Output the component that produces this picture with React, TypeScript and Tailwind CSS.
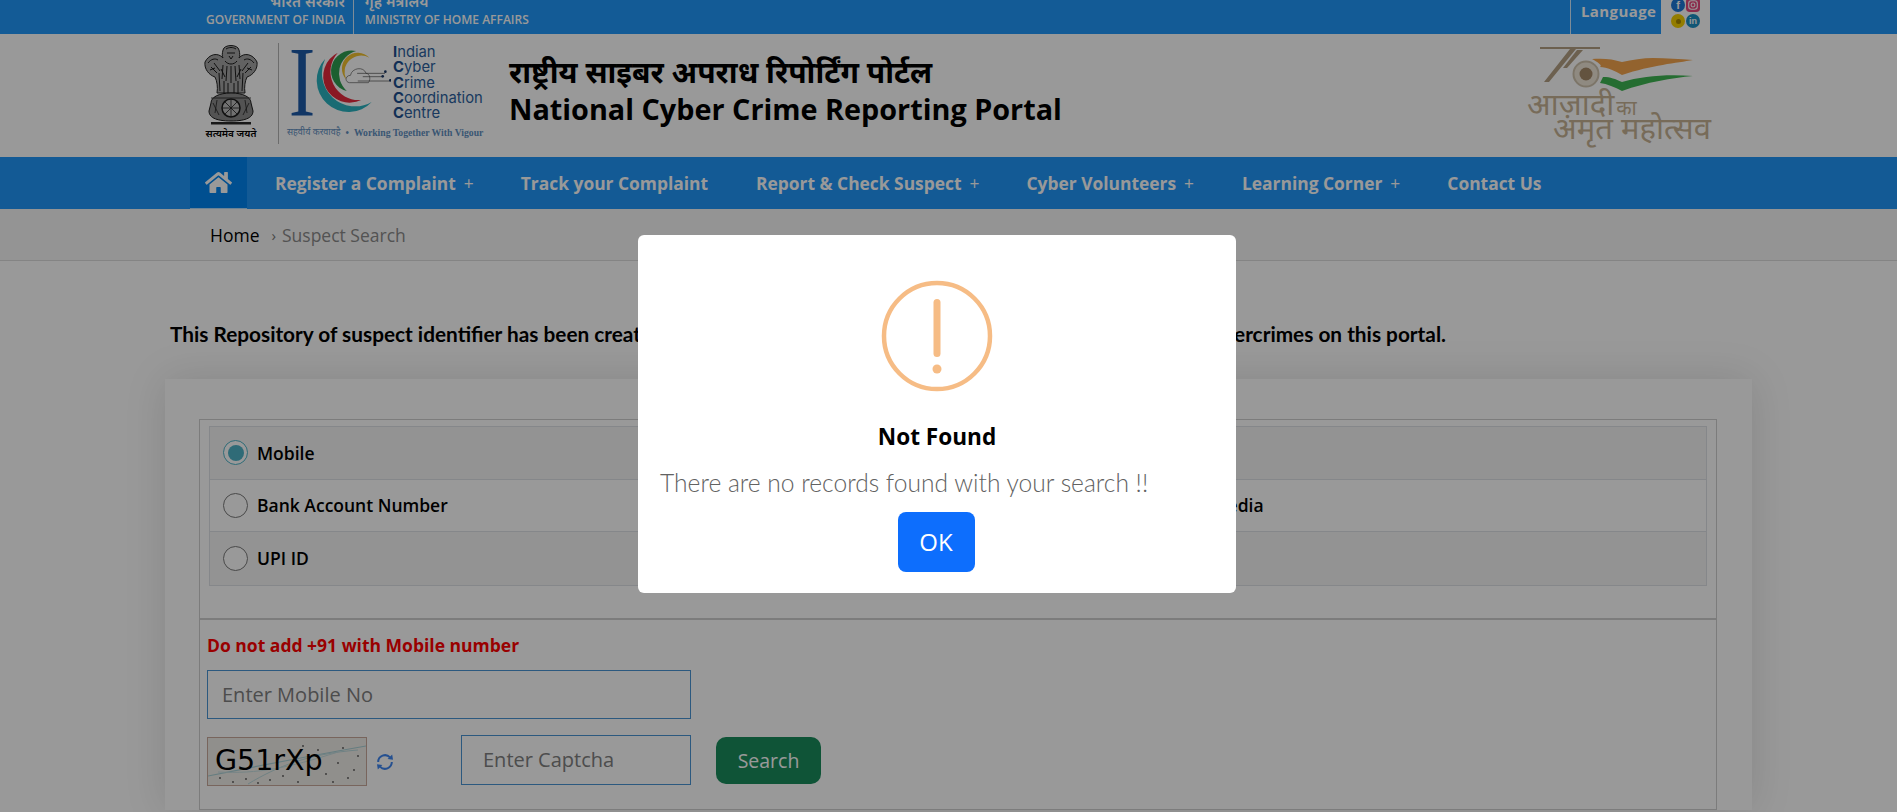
import { FaHome } from "react-icons/fa";

function Emblem() {
  return (
    <div className="flex w-[56px] flex-col items-center">
      <svg width="56" height="84" viewBox="0 0 56 84" fill="none">
        <path d="M20 7 C21 1 35 1 36 7 C37 11 37 13 36 15 C41 9 50 11 54 19 C55 26 50 32 44 34 C42 38 41 44 42 50 L14 50 C15 44 14 38 12 34 C6 32 1 26 2 19 C6 11 15 9 20 15 C19 13 19 11 20 7 Z" fill="#a4a4a4" stroke="#222" strokeWidth="1" />
        <path d="M23 6 C26 4 30 4 33 6 M24 10 H32 M26 13 L28 16 L30 13 M22 18 C25 22 31 22 34 18 M5 20 C8 16 12 15 15 17 M41 17 C44 15 48 16 51 20 M8 24 L14 30 M11 20 L17 28 M48 24 L42 30 M45 20 L39 28 M20 22 L19 36 M24 23 L23 38 M28 23 V40 M32 23 L33 38 M36 22 L37 36 M16 30 L17 48 M40 30 L39 48 M21 38 L21 50 M25 40 L25 50 M31 40 L31 50 M35 38 L35 50 M7 27 L12 25 M49 27 L44 25 M18 26 L22 34 M38 26 L34 34" stroke="#1c1c1c" strokeWidth="1" />
        <path d="M8 60 C8 54 16 50 28 50 C40 50 48 54 48 60 L50 68 C50 74 44 78 28 78 C12 78 6 74 6 68 Z" fill="#8a8a8a" stroke="#1c1c1c" strokeWidth="1" />
        <circle cx="28" cy="65" r="9" fill="#bdbdbd" stroke="#1c1c1c" strokeWidth="1.5" />
        <path d="M28 56 V74 M19 65 H37 M22 59 L34 71 M34 59 L22 71" stroke="#1c1c1c" strokeWidth="0.8" />
        <path d="M10 60 L16 72 M14 57 L12 70 M46 60 L40 72 M42 57 L44 70 M8 55 H48" stroke="#222" strokeWidth="0.8" />
        <rect x="8" y="79" width="40" height="2.5" fill="#2a2a2a" />
      </svg>
      <div className="mt-[1px] whitespace-nowrap font-['Noto_Sans_Devanagari','Noto_Sans',sans-serif] text-[10px] leading-[14px] font-semibold text-black">
        सत्यमेव जयते
      </div>
    </div>
  );
}

function IcccMark() {
  return (
    <svg width="103" height="70" viewBox="320 140 310 210" fill="none" className="shrink-0">
      <text x="0" y="348" transform="translate(322 0) scale(0.8 1)" fontFamily="Liberation Serif" fontSize="300" fill="#1d5aa8">
        I
      </text>
      <path d="M432 178 A100 100 0 0 0 572 308 A85 85 0 0 1 432 178 Z" fill="#2bb3c0" />
      <path d="M470 160 A85 85 0 0 0 540 302 A74 74 0 0 1 470 160 Z" fill="#e62a3c" />
      <path d="M525 155 A70 70 0 0 0 497 275 A60 60 0 0 1 525 155 Z" fill="#2f9e50" />
      <path d="M565 175 A50 50 0 0 0 495 240 A44 44 0 0 1 565 175 Z" fill="#f2c230" />
      <path d="M505 250 C490 248 492 228 508 228 C512 205 548 200 555 222 C566 222 570 240 562 250 Z" stroke="#555" strokeWidth="2" />
      <path d="M528 222 H612 M545 232 H604 M530 245 H628" stroke="#444" strokeWidth="2" />
      <circle cx="613" cy="217" r="4" fill="#1d3a6a" />
      <circle cx="605" cy="231" r="4" fill="#1d3a6a" />
      <circle cx="628" cy="243" r="4" fill="#1d3a6a" />
    </svg>
  );
}

function IcccLogo() {
  const names = [
    ["I", "ndian"],
    ["C", "yber"],
    ["C", "rime"],
    ["C", "oordination"],
    ["C", "entre"],
  ];
  return (
    <div className="ml-[19px] flex h-[101px] w-[205px] flex-col border-l border-[#b5b5b5] pl-[9px]">
      <div className="flex items-start pt-[3px]">
        <IcccMark />
        <div className="mt-[-1px] ml-[2px] font-['Inter',sans-serif] text-[14.8px] leading-[15.3px] text-[#2c5f9e]">
          {names.map(([a, b], i) => (
            <div key={i}>
              <span className="font-bold text-[#1d4f8f]">{a}</span>
              {b}
            </div>
          ))}
        </div>
      </div>
      <div className="mt-[6px] ml-[-1px] flex items-center whitespace-nowrap font-['Liberation_Serif',serif] text-[9.7px] leading-[12px] font-bold text-[#5f8fbf]">
        <span className="font-['Noto_Sans_Devanagari','Noto_Sans',sans-serif] text-[9px] font-normal">सहवीर्य करवावहै</span>
        <span className="mx-[5px]">•</span>
        <span>Working Together With Vigour</span>
      </div>
    </div>
  );
}

function AzadiLogo() {
  return (
    <div className="mt-[2px] flex w-[190px] flex-col">
      <svg width="190" height="46" viewBox="0 0 190 46" fill="none">
        <path d="M13 2 H73 V4 H49 L22 37 H17 L43 4 H13 Z" fill="#b5a184" />
        <path d="M50 5 H56 L40 23 H36 Z" fill="#b5a184" />
        <circle cx="59" cy="29" r="12.5" fill="#efe6d8" stroke="#cfc3ae" strokeWidth="2" />
        <circle cx="59" cy="29" r="6.5" fill="#a58a6a" />
        <path d="M65 14 C76 13 86 14 95 17 C105 15 116 13 126 13 C140 13 152 14 166 15 C150 18 125 20 95 30 C88 26 80 22 73 22 C76 20 70 17 65 14 Z" fill="#f5a64e" />
        <path d="M76 32 C84 32 88 34 95 37 C115 31 140 29 166 31 C145 33 120 37 95 46 C88 42 80 39 73 38 Z" fill="#3fb653" />
      </svg>
      <div className="mt-[6px] whitespace-nowrap font-['Noto_Sans_Devanagari','Noto_Sans',sans-serif] text-[#c7b394]">
        <div className="text-[31px] leading-[21px] font-normal">
          आज़ादी<span className="ml-[2px] text-[20px]">का</span>
        </div>
        <div className="pl-[26px] text-[31px] leading-[21px] font-normal">अमृत महोत्सव</div>
      </div>
    </div>
  );
}

function Social() {
  return (
    <div className="grid h-[34px] w-[49px] grid-cols-[14px_14px] content-start gap-x-[1px] gap-y-[2px] bg-white pl-[10px]">
      <span className="mt-[-2px] flex h-[14px] w-[14px] items-center justify-center rounded-full bg-[#1f78d8] font-['Liberation_Sans',sans-serif] text-[11px] font-bold text-white">
        f
      </span>
      <svg width="14" height="14" viewBox="0 0 13 13" className="mt-[-2px]">
        <rect width="13" height="13" rx="3.5" fill="#e8487e" />
        <rect x="2.5" y="2.5" width="8" height="8" rx="2.5" fill="none" stroke="#fff" strokeWidth="1" />
        <circle cx="6.5" cy="6.5" r="1.8" fill="none" stroke="#fff" strokeWidth="1" />
      </svg>
      <span className="flex h-[14px] w-[14px] items-center justify-center rounded-full bg-[#f5d000]">
        <span className="h-[5px] w-[5px] rounded-full bg-[#a88a00]" />
      </span>
      <span className="flex h-[14px] w-[14px] items-center justify-center rounded-full bg-[#1c8fc4] font-['Liberation_Sans',sans-serif] text-[9px] font-bold text-white">
        in
      </span>
    </div>
  );
}

function Radio({ checked, label }: { checked?: boolean; label: string }) {
  return (
    <div className="flex items-center">
      <span
        className={
          checked
            ? "flex h-[25px] w-[25px] items-center justify-center rounded-full border border-[#4fb3c7] bg-white"
            : "h-[25px] w-[25px] rounded-full border border-[#7a7a7a] bg-white"
        }
      >
        {checked && <span className="h-[16px] w-[16px] rounded-full bg-[#4fb3c7]" />}
      </span>
      <span className="ml-[9px] text-[17.5px] font-semibold text-black">{label}</span>
    </div>
  );
}

const rows = [
  ["Mobile", "Email ID", true],
  ["Bank Account Number", "Social Media", false],
  ["UPI ID", "Website", false],
] as const;

function Captcha() {
  return (
    <div className="relative flex h-[49px] w-[160px] items-center overflow-hidden border border-[#c9a89c] bg-[#f1efe9] pl-[7px]">
      <svg className="absolute inset-0" width="160" height="49" viewBox="0 0 160 49" fill="none">
        <path d="M0 38 C40 30 90 20 158 8" stroke="#a9d0d6" strokeWidth="1.2" />
        <path d="M40 46 C70 28 100 16 150 12" stroke="#b9d8dc" strokeWidth="1" />
        <path d="M10 34 C50 36 80 30 130 14" stroke="#c4dde0" strokeWidth="1" />
        {[[12, 40], [25, 44], [38, 41], [50, 45], [62, 42], [75, 38], [90, 44], [104, 30], [118, 36], [130, 25], [140, 40], [150, 18], [146, 32], [125, 44], [110, 12], [95, 8], [135, 10]].map(([x, y], i) => (
          <circle key={i} cx={x} cy={y} r="0.9" fill="#555" />
        ))}
      </svg>
      <span className="relative font-['DejaVu_Sans',sans-serif] text-[28.5px] leading-none text-black">G51rXp</span>
    </div>
  );
}

function RefreshIcon() {
  return (
    <svg width="20" height="20" viewBox="0 0 20 20" fill="none" className="ml-[8px]">
      <path d="M3.2 10 A6.8 6.8 0 0 1 15 5.4" stroke="#3f86f0" strokeWidth="2" />
      <path d="M16.8 10 A6.8 6.8 0 0 1 5 14.6" stroke="#3f86f0" strokeWidth="2" />
      <path d="M12.6 7 L18 7.8 L17.2 2.6 Z" fill="#3f86f0" />
      <path d="M7.4 13 L2 12.2 L2.8 17.4 Z" fill="#3f86f0" />
    </svg>
  );
}

function Modal() {
  return (
    <div className="absolute inset-0 z-10 flex items-start bg-black/40 pt-[235px] pl-[638px]">
      <div className="flex h-[358px] w-[598px] flex-col items-center rounded-[6px] bg-white">
        <svg width="112" height="112" viewBox="0 0 112 112" fill="none" className="mt-[45px]">
          <circle cx="56" cy="56" r="53" stroke="#f6bc85" strokeWidth="4.5" />
          <rect x="52.5" y="19" width="7" height="58" rx="3.5" fill="#f6bc85" />
          <circle cx="56" cy="89" r="4.5" fill="#f6bc85" />
        </svg>
        <div className="mt-[28px] font-['Open_Sans',sans-serif] text-[22.6px] leading-[33px] font-bold text-black">Not Found</div>
        <div className="mt-[13px] w-full pl-[22px] font-['Lato',sans-serif] text-[24.6px] leading-[34px] font-light text-[#626262]">
          There are no records found with your search !!
        </div>
        <div className="mt-[12px] mr-[2px] flex h-[60px] w-[77px] items-center justify-center rounded-[8px] bg-[#0d6efd] font-['Open_Sans',sans-serif] text-[24px] text-white">
          OK
        </div>
      </div>
    </div>
  );
}

export default function App() {
  return (
    <div className="relative h-[812px] w-full overflow-hidden bg-white font-['Open_Sans',sans-serif]">
      <div className="flex h-[34px] items-end overflow-hidden bg-[#2098fa] pl-[206px] text-[12px] leading-[16px] font-semibold text-white">
        <div className="flex h-[34px] flex-col items-end justify-end pb-[6px] pr-[8px]">
          <span className="font-['Noto_Sans_Devanagari','Noto_Sans',sans-serif] text-[15px] whitespace-nowrap">भारत सरकार</span>
          <span className="whitespace-nowrap">GOVERNMENT OF INDIA</span>
        </div>
        <div className="flex h-[34px] flex-col justify-end border-l border-white/80 pb-[6px] pl-[11px]">
          <span className="font-['Noto_Sans_Devanagari','Noto_Sans',sans-serif] text-[15px] whitespace-nowrap">गृह मंत्रालय</span>
          <span className="whitespace-nowrap">MINISTRY OF HOME AFFAIRS</span>
        </div>
        <div className="ml-auto mr-[187px] flex h-[34px] items-start">
          <div className="h-[34px] w-[90px] border-l border-white/80 pl-[10px] font-bold text-[15px] leading-[23px] tracking-[0.4px]">Language</div>
          <div className="ml-[1px]">
            <Social />
          </div>
        </div>
      </div>

      <div className="flex h-[123px] bg-white pl-[203px] pt-[9px]">
        <Emblem />
        <IcccLogo />
        <div className="ml-[26px] mt-[12px] text-black">
          <div className="font-['Noto_Sans_Devanagari','Noto_Sans',sans-serif] text-[30px] leading-[42px] font-bold whitespace-nowrap">
            राष्ट्रीय साइबर अपराध रिपोर्टिंग पोर्टल
          </div>
          <div className="mt-[-7px] text-[28.8px] leading-[38px] font-bold whitespace-nowrap">National Cyber Crime Reporting Portal</div>
        </div>
        <div className="ml-auto mr-[180px]">
          <AzadiLogo />
        </div>
      </div>

      <nav className="flex h-[52px] items-center bg-[#2196f8] pl-[190px] text-[17.4px] font-bold text-white">
        <div className="flex h-[52px] w-[57px] items-center justify-center border-b border-white/70 bg-[#0084f0]">
          <FaHome size={27} />
        </div>
        <span className="ml-[28px] whitespace-nowrap">Register a Complaint<span className="ml-[8px] font-normal">+</span></span>
        <span className="ml-[47px] whitespace-nowrap">Track your Complaint</span>
        <span className="ml-[48px] whitespace-nowrap">Report &amp; Check Suspect<span className="ml-[8px] font-normal">+</span></span>
        <span className="ml-[47px] whitespace-nowrap">Cyber Volunteers<span className="ml-[8px] font-normal">+</span></span>
        <span className="ml-[48px] whitespace-nowrap">Learning Corner<span className="ml-[8px] font-normal">+</span></span>
        <span className="ml-[47px] whitespace-nowrap">Contact Us</span>
      </nav>

      <div className="flex h-[52px] items-center border-b border-[#dcdcdc] bg-[#f7f7f7] pl-[210px] pt-[1px] text-[17.5px]">
        <span className="text-black">Home</span>
        <span className="ml-[12px] text-[15px] text-[#777]">›</span>
        <span className="ml-[6px] text-[#8a8a8a]">Suspect Search</span>
      </div>

      <div className="pl-[170px] pt-[59px] font-['Lato',sans-serif] text-[20.8px] leading-[28px] font-bold whitespace-nowrap text-black">
        This Repository of suspect identifier has been created on the basis of complaints reported by citizens relating to cybercrimes on this portal.
      </div>

      <div className="mt-[31px] ml-[165px] w-[1587px] bg-white pr-[35px] pl-[34px] pt-[40px] shadow-[0_0_40px_rgba(0,0,0,0.12)]">
        <div className="h-[201px] border border-b-2 border-[#cfcfcf] px-[9px] pt-[6px]">
          <div className="border border-[#dee2e6]">
            {rows.map(([a, b, c], i) => (
              <div key={a} className={(i % 2 === 0 ? "bg-black/[0.04] " : "") + (i < 2 ? "border-b border-[#dee2e6] " : "") + "flex h-[52.5px] items-center pl-[13px]"}>
                <div className="w-[901px]">
                  <Radio checked={c} label={a} />
                </div>
                <Radio label={b} />
              </div>
            ))}
          </div>
        </div>
        <div className="h-[190px] border-x border-b border-[#cfcfcf] pl-[7px]">
          <div className="pt-[13px] text-[17.5px] leading-[24px] font-bold text-[#ff0000]">Do not add +91 with Mobile number</div>
          <div className="mt-[13px] flex h-[49px] w-[484px] items-center border border-[#4a94d4] pl-[14px] text-[20px] text-[#808080]">Enter Mobile No</div>
          <div className="mt-[16px] flex items-start">
            <div className="mt-[2px] flex items-center">
              <Captcha />
              <RefreshIcon />
            </div>
            <div className="ml-[66px] flex h-[50px] w-[230px] items-center border border-[#4a94d4] pl-[21px] text-[20px] text-[#808080]">Enter Captcha</div>
            <div className="ml-[25px] mt-[2px] flex h-[47px] w-[105px] items-center justify-center rounded-[10px] bg-[#198c5c] text-[19.5px] text-white">Search</div>
          </div>
        </div>
      </div>

      <Modal />
    </div>
  );
}
